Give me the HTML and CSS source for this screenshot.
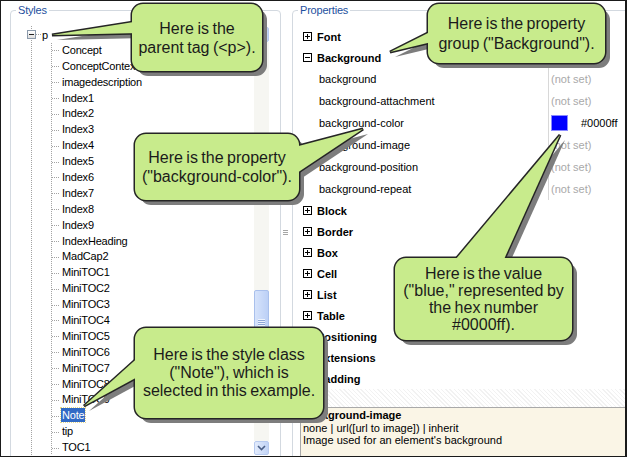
FILE: index.html
```html
<!DOCTYPE html>
<html lang="en">
<head>
  <meta charset="UTF-8" />
  <title>Styles and Properties</title>
  <link rel="stylesheet" href="styles.css">
</head>
<body>
  <div class="frame">
    <section class="group styles-group">
      <span class="group-title">Styles</span>
      <div class="styles-body">
        <div class="tree">
          <div class="tree-root"><span class="expander"></span><span class="root-label">p</span></div>
          <div class="tree-item">Concept</div>
          <div class="tree-item">ConceptContext</div>
          <div class="tree-item">imagedescription</div>
          <div class="tree-item">Index1</div>
          <div class="tree-item">Index2</div>
          <div class="tree-item">Index3</div>
          <div class="tree-item">Index4</div>
          <div class="tree-item">Index5</div>
          <div class="tree-item">Index6</div>
          <div class="tree-item">Index7</div>
          <div class="tree-item">Index8</div>
          <div class="tree-item">Index9</div>
          <div class="tree-item">IndexHeading</div>
          <div class="tree-item">MadCap2</div>
          <div class="tree-item">MiniTOC1</div>
          <div class="tree-item">MiniTOC2</div>
          <div class="tree-item">MiniTOC3</div>
          <div class="tree-item">MiniTOC4</div>
          <div class="tree-item">MiniTOC5</div>
          <div class="tree-item">MiniTOC6</div>
          <div class="tree-item">MiniTOC7</div>
          <div class="tree-item">MiniTOC8</div>
          <div class="tree-item">MiniTOC9</div>
          <div class="tree-item"><span class="selected">Note</span></div>
          <div class="tree-item">tip</div>
          <div class="tree-item">TOC1</div>
        </div>
        <div class="scrollbar">
          <div class="sb-arrow"></div>
          <div class="sb-track"><div class="sb-thumb"><span class="sb-grip"></span></div></div>
          <div class="sb-arrow down">
            <svg width="9" height="6" viewBox="0 0 9 6"><path d="M1 1 L4.5 4.5 L8 1" fill="none" stroke="#4a5f87" stroke-width="1.6"/></svg>
          </div>
        </div>
      </div>
    </section>

    <div class="splitter"><span class="grip"></span></div>

    <section class="group props-group">
      <span class="group-title">Properties</span>
      <div class="props">
        <div class="prop-group"><span class="toggle plus"></span>Font</div>
        <div class="prop-group"><span class="toggle"></span>Background</div>
        <div class="prop"><span class="prop-name">background</span><span class="prop-value unset">(not set)</span></div>
        <div class="prop"><span class="prop-name">background-attachment</span><span class="prop-value unset">(not set)</span></div>
        <div class="prop"><span class="prop-name">background-color</span><span class="prop-value"><span class="swatch"></span><span class="hex">#0000ff</span></span></div>
        <div class="prop"><span class="prop-name">background-image</span><span class="prop-value unset">(not set)</span></div>
        <div class="prop"><span class="prop-name">background-position</span><span class="prop-value unset">(not set)</span></div>
        <div class="prop"><span class="prop-name">background-repeat</span><span class="prop-value unset">(not set)</span></div>
        <div class="prop-group"><span class="toggle plus"></span>Block</div>
        <div class="prop-group"><span class="toggle plus"></span>Border</div>
        <div class="prop-group"><span class="toggle plus"></span>Box</div>
        <div class="prop-group"><span class="toggle plus"></span>Cell</div>
        <div class="prop-group"><span class="toggle plus"></span>List</div>
        <div class="prop-group"><span class="toggle plus"></span>Table</div>
        <div class="prop-group"><span class="toggle plus"></span>Positioning</div>
        <div class="prop-group"><span class="toggle plus"></span>Extensions</div>
        <div class="prop-group"><span class="toggle plus"></span>Padding</div>
      </div>
      <div class="props-gap"></div>
      <div class="description">
        <div class="desc-title">background-image</div>
        <div>none | url([url to image]) | inherit</div>
        <div>Image used for an element's background</div>
      </div>
    </section>

    <!-- callout bubbles -->
    <svg class="callouts" width="627" height="457" viewBox="0 0 627 457">
      <defs>
        <g id="bubbles">
          <rect x="132" y="4" width="130" height="67" rx="11"/>
          <polygon points="52,35 140,21 140,33"/>
          <rect x="428" y="4" width="177" height="59" rx="11"/>
          <polygon points="390,52 436,29 436,41"/>
          <rect x="135" y="134" width="164" height="66" rx="11"/>
          <polygon points="363,129 291,148 291,177"/>
          <rect x="395" y="258" width="177" height="82" rx="11"/>
          <polygon points="560,135 450,266 501,266"/>
          <rect x="135" y="328" width="188" height="90" rx="11"/>
          <polygon points="84,406 143,353 143,374"/>
        </g>
      </defs>
      <use href="#bubbles" class="bubble-shadow" transform="translate(5 5)"/>
      <use href="#bubbles" class="bubble-edge"/>
      <use href="#bubbles" class="bubble-fill"/>
    </svg>
    <div class="callout-text c1">Here is the<br>parent tag (&lt;p&gt;).</div>
    <div class="callout-text c2">Here is the property<br>group ("Background").</div>
    <div class="callout-text c3">Here is the property<br>("background-color").</div>
    <div class="callout-text c4">Here is the value<br>("blue," represented by<br>the hex number<br>#0000ff).</div>
    <div class="callout-text c5">Here is the style class<br>("Note"), which is<br>selected in this example.</div>
  </div>
</body>
</html>
```

FILE: styles.css
```css
* {
  box-sizing: border-box;
  margin: 0;
  padding: 0;
}

body {
  font-family: "Liberation Sans", Arial, sans-serif;
  font-size: 11px;
  color: #000;
  background: #fff;
}

.frame {
  position: relative;
  display: flex;
  align-items: flex-start;
  width: 627px;
  height: 457px;
  border: 1px solid #1a1a1a;
  border-right-width: 2px;
  overflow: hidden;
  background: #fff;
}

/* group boxes */
.group {
  display: flex;
  flex-direction: column;
  flex-shrink: 0;
  height: 470px;
  margin-top: 9px;
  border: 1px solid #d3d9e0;
  border-radius: 4px;
}

.group-title {
  align-self: flex-start;
  margin: -7px 0 0 5px;
  padding: 0 2px;
  line-height: 13px;
  background: #fff;
  color: #1d4f9e;
  letter-spacing: -0.2px;
}

.styles-group {
  width: 271px;
  margin-left: 9px;
}

.styles-body {
  display: flex;
  height: 429px;
  margin: 9px 11px 0 0;
}

/* tree */
.tree {
  flex: 1;
  padding-top: 1px;
  overflow: hidden;
  letter-spacing: -0.2px;
  background:
    repeating-linear-gradient(to bottom, #a3a3a3 0 1px, transparent 1px 2px) 20px 0 / 1px 100% no-repeat,
    repeating-linear-gradient(to bottom, #a3a3a3 0 1px, transparent 1px 2px) 40px 17px / 1px 100% no-repeat;
}

.tree-root {
  display: flex;
  align-items: center;
  height: 15.9px;
}

.expander {
  width: 9px;
  height: 9px;
  margin-left: 16px;
  border: 1px solid #8b9aab;
  background:
    linear-gradient(#222, #222) 1px 3px / 5px 1px no-repeat,
    linear-gradient(#fff, #dedede);
}

.root-label {
  padding-left: 6px;
  background: repeating-linear-gradient(to right, #a3a3a3 0 1px, transparent 1px 2px) 0 50% / 5px 1px no-repeat;
}

.tree-item {
  height: 15.9px;
  line-height: 15.9px;
  padding-left: 51px;
  white-space: nowrap;
  background: repeating-linear-gradient(to right, #a3a3a3 0 1px, transparent 1px 2px) 41px 50% / 8px 1px no-repeat;
}

.selected {
  margin-left: -1px;
  padding: 1px 1px;
  background: #316ac5;
  color: #fff;
  outline: 1px dotted #e9d98a;
}

/* scrollbar */
.scrollbar {
  display: flex;
  flex-direction: column;
  width: 15px;
  margin-top: 1px;
}

.sb-arrow {
  display: flex;
  align-items: center;
  justify-content: center;
  height: 15px;
  border: 1px solid #b7caef;
  border-radius: 2px;
  background: linear-gradient(to right, #e2ebfc, #c2d4f6);
}

.sb-arrow.down {
  height: 14px;
}

.sb-track {
  flex: 1;
  background: #f6f6f2;
}

.sb-thumb {
  display: flex;
  align-items: center;
  justify-content: center;
  height: 64px;
  margin-top: 248px;
  border: 1px solid #a9c0ec;
  border-radius: 2px;
  background: linear-gradient(to right, #d6e3fb, #bcd0f6);
}

.sb-grip {
  width: 7px;
  height: 7px;
  background: repeating-linear-gradient(to bottom, #eef3fd 0 1px, #8ea8d8 1px 2px);
}

/* splitter */
.splitter {
  flex-shrink: 0;
  width: 11px;
  padding-top: 229px;
}

.grip {
  display: block;
  width: 5px;
  height: 5px;
  margin-left: 2px;
  background: repeating-linear-gradient(to bottom, #a6a6a6 0 1px, transparent 1px 2px);
}

/* property grid */
.props-group {
  width: 345px;
}

.props {
  margin-top: 9px;
}

.prop-group {
  display: flex;
  align-items: center;
  height: 21px;
  padding-left: 10px;
  font-weight: bold;
}

.toggle {
  width: 9px;
  height: 9px;
  margin-right: 5px;
  border: 1px solid #000;
  background: linear-gradient(#000, #000) 1px 3px / 5px 1px no-repeat;
}

.toggle.plus {
  background:
    linear-gradient(#000, #000) 1px 3px / 5px 1px no-repeat,
    linear-gradient(#000, #000) 3px 1px / 1px 5px no-repeat;
}

.prop {
  display: flex;
  height: 22px;
  padding-left: 26px;
}

.prop-name {
  display: flex;
  align-items: center;
  width: 229px;
}

.prop-value {
  display: flex;
  align-items: center;
  padding-left: 2px;
  border-left: 1px solid #d8d8d8;
}

.unset {
  color: #a9a9a9;
}

.swatch {
  width: 17px;
  height: 16px;
  border: 1px solid #8a8aff;
  background: #0000ff;
}

.hex {
  margin-left: 13px;
}

.props-gap {
  height: 18px;
  background: repeating-linear-gradient(45deg, #f2f2f2 0 1px, #fff 1px 3px);
}

.description {
  height: 60px;
  margin-left: 7px;
  padding: 1px 0 0 2px;
  line-height: 12.5px;
  border-top: 1px solid #a9a9a9;
  border-left: 1px solid #a9a9a9;
  background: #faf5e6;
}

.desc-title {
  font-weight: bold;
}

/* callouts */
.callouts {
  position: absolute;
  left: -1px;
  top: -1px;
}

.bubble-shadow {
  fill: #7d7d7d;
}

.bubble-edge {
  fill: none;
  stroke: #252525;
  stroke-width: 3;
}

.bubble-fill {
  fill: #c8eb8c;
}

.callout-text {
  position: absolute;
  display: flex;
  align-items: center;
  justify-content: center;
  text-align: center;
  font-size: 16px;
  color: #1b1b1b;
  word-spacing: -1px;
  white-space: nowrap;
}

.c1 { left: 131px; top: 3px; width: 130px; height: 67px; line-height: 19px; }
.c2 { left: 427px; top: 3px; width: 177px; height: 59px; line-height: 20px; }
.c3 { left: 134px; top: 133px; width: 164px; height: 66px; line-height: 19px; }
.c4 { left: 394px; top: 257px; width: 177px; height: 82px; line-height: 17px; }
.c5 { left: 134px; top: 327px; width: 188px; height: 90px; line-height: 18px; }
```
